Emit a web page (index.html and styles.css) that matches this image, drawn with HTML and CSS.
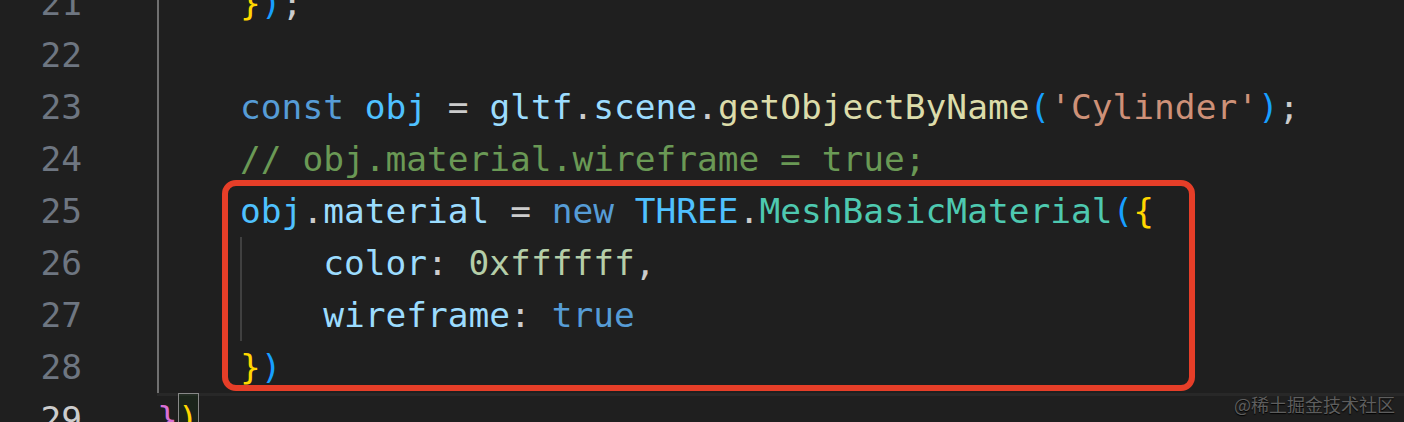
FILE: index.html
```html
<!DOCTYPE html>
<html lang="en">
<head>
<meta charset="utf-8">
<title>Editor</title>
<link rel="stylesheet" href="styles.css">
</head>
<body>
<div class="editor">
  <div class="line"><span class="ln">21</span><div class="code"><span class="ind active"></span><span class="txt"><span class="br-y">}</span><span class="br-b">)</span><span class="p">;</span></span></div></div>
  <div class="line"><span class="ln">22</span><div class="code"><span class="ind active"></span><span class="txt"></span></div></div>
  <div class="line"><span class="ln">23</span><div class="code"><span class="ind active"></span><span class="txt"><span class="kw">const</span> <span class="cv">obj</span> <span class="p">=</span> <span class="v">gltf</span><span class="p">.</span><span class="v">scene</span><span class="p">.</span><span class="fn">getObjectByName</span><span class="br-b">(</span><span class="str">'Cylinder'</span><span class="br-b">)</span><span class="p">;</span></span></div></div>
  <div class="line"><span class="ln">24</span><div class="code"><span class="ind active"></span><span class="txt cm">// obj.material.wireframe = true;</span></div></div>
  <div class="line"><span class="ln">25</span><div class="code"><span class="ind active"></span><span class="txt"><span class="cv">obj</span><span class="p">.</span><span class="v">material</span> <span class="p">=</span> <span class="kw">new</span> <span class="cv">THREE</span><span class="p">.</span><span class="cls">MeshBasicMaterial</span><span class="br-b">(</span><span class="br-y">{</span></span></div></div>
  <div class="line"><span class="ln">26</span><div class="code"><span class="ind active"></span><span class="ind"></span><span class="txt"><span class="v">color</span><span class="p">:</span> <span class="num">0xffffff</span><span class="p">,</span></span></div></div>
  <div class="line"><span class="ln">27</span><div class="code"><span class="ind active"></span><span class="ind"></span><span class="txt"><span class="v">wireframe</span><span class="p">:</span> <span class="kw">true</span></span></div></div>
  <div class="line"><span class="ln">28</span><div class="code"><span class="ind active"></span><span class="txt"><span class="br-y">}</span><span class="br-b">)</span></span></div></div>
  <div class="line current"><span class="ln">29</span><div class="code"><span class="txt"><span class="br-p">}</span><span class="br-y match">)</span></span></div></div>
</div>
<div class="highlight-box"></div>
<div class="watermark">@稀土掘金技术社区</div>
</body>
</html>
```

FILE: styles.css
```css
html, body {
  margin: 0;
  padding: 0;
  background: #1f1f1f;
  width: 1404px;
  height: 422px;
  overflow: hidden;
  position: relative;
}

.editor {
  margin-top: -23px;
  font-family: "DejaVu Sans Mono", "Liberation Mono", monospace;
  font-size: 34.5px;
  line-height: 52px;
  color: #d4d4d4;
}

.line {
  display: flex;
  height: 52px;
}

.ln {
  flex: none;
  width: 82px;
  text-align: right;
  color: #6e7681;
}

.current .ln {
  color: #cccccc;
}

.code {
  flex: 1;
  display: flex;
  margin-left: 75px;
}

.current .code {
  box-shadow: inset 0 3px 0 #282828;
}

.ind {
  flex: none;
  width: 4ch;
  box-sizing: border-box;
  border-left: 2px solid #404040;
}

.ind.active {
  border-left-color: #707070;
}

.txt {
  white-space: pre;
}

.kw { color: #569cd6; }
.cv { color: #4fc1ff; }
.v { color: #9cdcfe; }
.fn { color: #dcdcaa; }
.cls { color: #4ec9b0; }
.str { color: #ce9178; }
.num { color: #b5cea8; }
.cm { color: #6a9955; }
.p { color: #cccccc; }
.br-y { color: #ffd700; }
.br-b { color: #179fff; }
.br-p { color: #da70d6; }

.match {
  display: inline-block;
  height: 52px;
  vertical-align: top;
  box-shadow: inset 0 0 0 1px #888888;
  background: rgba(0, 100, 0, 0.1);
}

.highlight-box {
  position: absolute;
  left: 222px;
  top: 180px;
  width: 973px;
  height: 211px;
  box-sizing: border-box;
  border: 6px solid #e63e28;
  border-radius: 14px;
}

.watermark {
  position: absolute;
  right: 9px;
  bottom: 8px;
  font-family: "Noto Sans CJK SC", sans-serif;
  font-size: 18px;
  line-height: 20px;
  color: #5e5e5e;
  text-shadow: 0 1px 1px #000000;
}
```
